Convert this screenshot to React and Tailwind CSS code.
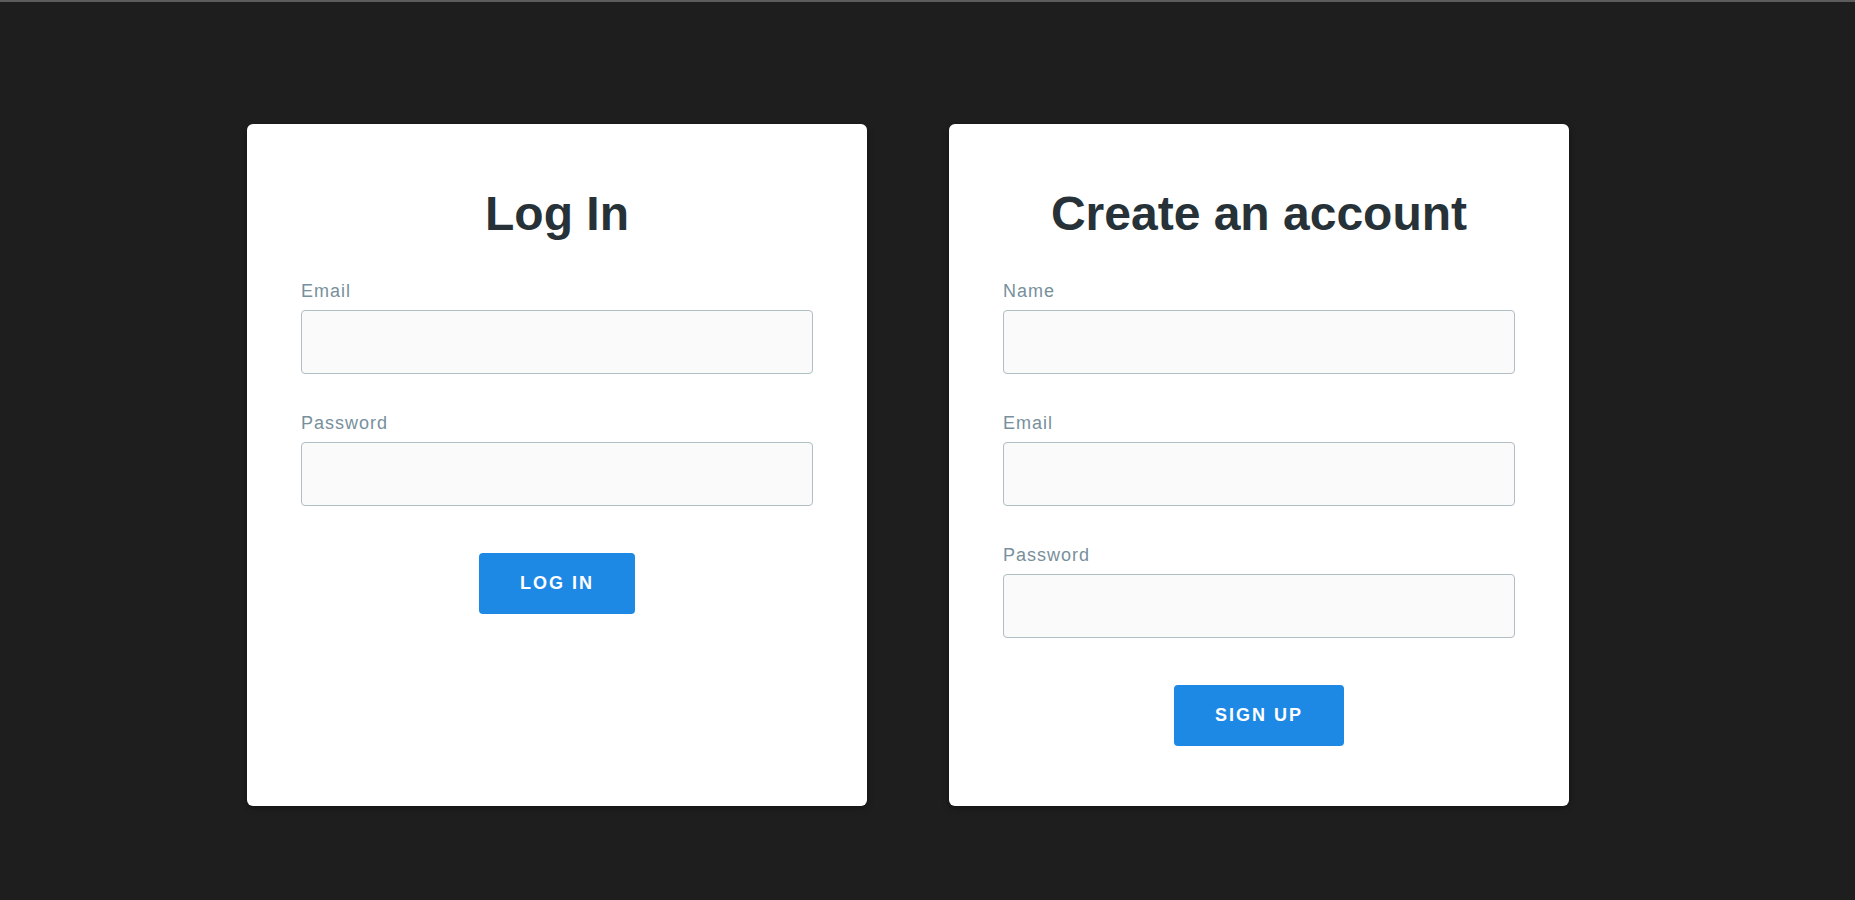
import React from 'react';

const Field = ({ label, type = 'text' }) => (
  <div className="mb-[36px]">
    <label className="block text-[18px] leading-[27px] tracking-[1px] text-[#78909c]">{label}</label>
    <input
      type={type}
      className="mt-[5px] block h-[64px] w-full rounded-[4px] border border-[#b0bec5] bg-[#fafafa] px-4 text-[18px] text-[#263238] outline-none"
    />
  </div>
);

const Card = ({ title, fields, button }) => (
  <div className="flex w-[620px] flex-col rounded-md bg-white px-[54px] pt-[54px] pb-[60px] shadow-[0_2px_6px_rgba(0,0,0,0.35)]">
    <h1 className="mb-[28px] text-center text-[48px] font-bold leading-[72px] text-[#263238]">{title}</h1>
    {fields.map((f) => (
      <Field key={f.label} label={f.label} type={f.type} />
    ))}
    <div className="mt-[11px] flex justify-center">
      <button className="flex h-[61px] items-center rounded-[4px] bg-[#1e88e5] px-[41px] text-[18px] font-bold uppercase tracking-[2px] text-white">
        {button}
      </button>
    </div>
  </div>
);

export default function App() {
  return (
    <div
      className="min-h-screen border-t-2 border-[#5c5c5c] bg-[#1e1e1e] pt-[122px]"
      style={{ fontFamily: '"Liberation Sans", Arial, sans-serif' }}
    >
      <div className="flex items-stretch gap-[82px] pl-[247px]">
        <Card
          title="Log In"
          fields={[
            { label: 'Email', type: 'email' },
            { label: 'Password', type: 'password' }
          ]}
          button="Log In"
        />
        <Card
          title="Create an account"
          fields={[
            { label: 'Name' },
            { label: 'Email', type: 'email' },
            { label: 'Password', type: 'password' }
          ]}
          button="Sign Up"
        />
      </div>
    </div>
  );
}
